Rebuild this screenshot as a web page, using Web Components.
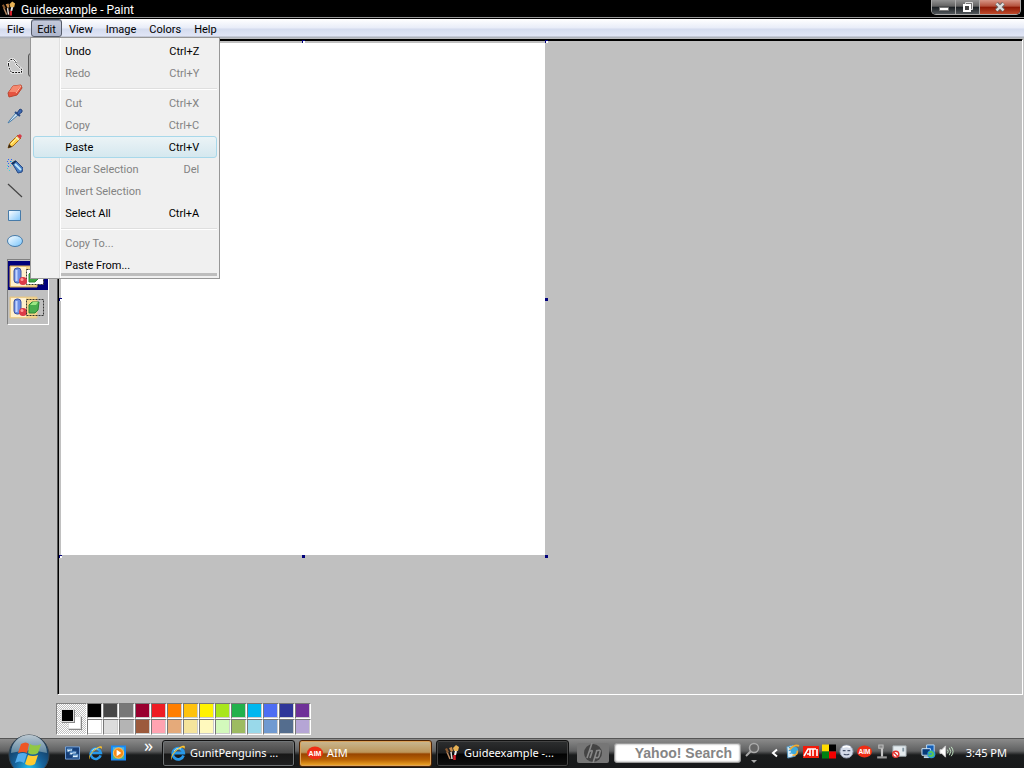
<!DOCTYPE html>
<html lang="en">
<head>
<meta charset="utf-8">
<title>Guideexample - Paint</title>
<style>
html, body { height: 100%; margin: 0; }
body { font: 12px "Roboto", "Liberation Sans", sans-serif; color: #000; background: #c0c0c0; overflow: hidden; }
</style>
</head>
<body>
<paint-desktop></paint-desktop>
<script>
const define = (name, render) => customElements.define(name, class extends HTMLElement {
  connectedCallback() {
    if (this.shadowRoot) return;
    const t = document.createElement('template');
    t.innerHTML = render(this);
    this.attachShadow({ mode: 'open' }).append(t.content.cloneNode(true));
  }
});

const icons = {
  brushes: `<svg viewBox="0 0 16 16"><path d="M3 7l3 7" stroke="#b98a63" stroke-width="1.500"/><path d="M1 4l2-1 2 4-2 1z" fill="#8a5a30"/><path d="M7 7l1 7" stroke="#e8e0d8" stroke-width="1.500"/><path d="M9 3l3-3 3 2-1 4-4 0z" fill="#e7b255"/><path d="M5 3l3-1 1 4-2 1z" fill="#c98c4c"/><path d="M12 6l-1 4" stroke="#eee" stroke-width="2"/><path d="M10.500 10v5" stroke="#d3202a" stroke-width="2.500"/></svg>`,
  lasso: `<svg viewBox="0 0 16 16"><path d="M1.500 7V4l2-2.500h3L9 4v2l5.500 5v3.500h-10L2.500 11z" fill="#c8c8c8" stroke="#fff" stroke-width="2"/><path d="M1.500 7V4l2-2.500h3L9 4v2l5.500 5v3.500h-10L2.500 11z" fill="none" stroke="#111" stroke-dasharray="2 1"/></svg>`,
  eraser: `<svg viewBox="0 0 16 16"><path d="M1 10l5-7 8-1 1 3-5 7-8 2z" fill="#e65440" stroke="#b9452f"/><path d="M2 9l4-6 8-1-5 7z" fill="#f58a70"/><path d="M9 10l5-7" stroke="#ffc0a8"/></svg>`,
  dropper: `<svg viewBox="0 0 16 16"><path d="M1 15l2-3 6-7 2 2-7 6z" fill="#cfe6f8" stroke="#497eaa"/><path d="M8 4l5 4" stroke="#264b87" stroke-width="2"/><path d="M10 5l3-4 2 1v2l-4 3z" fill="#3b67b2" stroke="#27457c"/></svg>`,
  pencil: `<svg viewBox="0 0 16 16"><path d="M1 15l2-5 8-8 3 3-8 8z" fill="#ffd34f" stroke="#a76912"/><path d="M1 15l1-4 3 3z" fill="#352717"/><path d="M10 3l3-2 2 2-2 3z" fill="#d33c4b"/><path d="M9 4l3 3" stroke="#e7eee0" stroke-width="1.500"/><path d="M4 11l6-6" stroke="#fff2a2"/></svg>`,
  spray: `<svg viewBox="0 0 16 16"><path d="M1 1.500h1m2 0h1M0 3.500h1m2 0h1M1 5.500h1m2 0h1M1 8.500h1" stroke="#2c62f2"/><path d="M0 7.500h1m2 0h1M0 10.500h1m1 2h1M4 3.500h1" stroke="#38d3e2"/><path d="M5 5l4-2 7 7-1 4-4 1z" fill="#477ec4" stroke="#294a85"/><path d="M8 6l6 6" stroke="#bfe6fa" stroke-width="2"/><path d="M5 6l4-3" stroke="#16345d" stroke-width="2"/></svg>`,
  line: `<svg viewBox="0 0 16 16"><path d="M1 1l14 13" stroke="#444" stroke-width="1.200"/></svg>`,
  rect: `<svg viewBox="0 0 16 16"><defs><linearGradient id="g" x2="1" y2="1"><stop stop-color="#fff"/><stop offset="1" stop-color="#80c5fa"/></linearGradient></defs><path d="M1.500 2.500h12v10h-12z" fill="url(#g)" stroke="#477ba9"/></svg>`,
  oval: `<svg viewBox="0 0 16 16"><defs><linearGradient id="g" x2="1" y2="1"><stop stop-color="#fff"/><stop offset="1" stop-color="#75c4fc"/></linearGradient></defs><ellipse cx="8" cy="8" rx="7.500" ry="5.500" fill="url(#g)" stroke="#477ba9"/></svg>`,
  opaque: `<svg viewBox="0 0 40 28"><path d="M2 4h27v21H2z" fill="#f5d68c" stroke="#d7aa5c"/><path d="M3 5h15v19H3z" fill="#fff0cc"/><path d="M18.500 7.500h17v15h-17z" stroke="#333" stroke-dasharray="2 1" fill="#fff"/><rect x="6" y="6" width="7" height="15" rx="3" fill="#6c8fe4" stroke="#3e539d"/><path d="M8.500 8v11" stroke="#c4d4ff" stroke-width="2"/><circle cx="15" cy="19" r="4" fill="#dd3a48"/><circle cx="14" cy="17.500" r="1.500" fill="#ff9a98"/><path d="M21 12l3-3h7l-1 8-3 3h-6z" fill="#3da545" stroke="#2c8635"/><path d="M22 12l3-3h5l-2 3z" fill="#91df7c"/></svg>`,
  transparent: `<svg viewBox="0 0 40 28"><path d="M2 4h27v21H2z" fill="#f5d68c" stroke="#e3c48a"/><path d="M3 5h15v19H3z" fill="#fff0cc"/><rect x="6" y="6" width="7" height="15" rx="3" fill="#6c8fe4" stroke="#3e539d"/><path d="M8.500 8v11" stroke="#c4d4ff" stroke-width="2"/><circle cx="15" cy="19" r="4" fill="#dd3a48"/><circle cx="14" cy="17.500" r="1.500" fill="#ff9a98"/><path d="M21 12l3-3h7l-1 8-3 3h-6z" fill="#48ae4d" stroke="#2c8635"/><path d="M22 12l3-3h5l-2 3z" fill="#9ae783"/><path d="M18.500 6.500h17v16h-17z" stroke="#333" stroke-dasharray="2 1" fill="none"/></svg>`,
  ie: `<svg viewBox="0 0 16 16"><path d="M13.500 10.500A5.500 5.500 0 1 1 13.700 8H4" fill="none" stroke="#2898e8" stroke-width="2.800"/><path d="M4 6a5 5 0 0 1 7-2" fill="none" stroke="#a5e4ff"/><path d="M2 15C-1 12 5 4 12 1c4-1 3 2 2 3 0-2-2-2-5 0C4 7 1 12 2 15z" fill="#ffc52c"/></svg>`,
  desktop: `<svg viewBox="0 0 16 14"><path d="M.500.500h15v13H.500z" fill="#173f79" stroke="#77a8e2"/><path d="M2 2h6v4H2zM5 5h7v4H5zM8 8h6v4H8z" fill="#e1f2ff" stroke="#24568f"/><path d="M3 3h4M6 6h5M9 9h4" stroke="#498bce"/></svg>`,
  player: `<svg viewBox="0 0 16 16"><path d="M1 1h14v14H1z" fill="#54b87c" stroke="#1689fb" stroke-width="2"/><path d="M2 2h12v3H2z" fill="#50b6e7"/><circle cx="8" cy="8" r="5.500" fill="#f58b16" stroke="#ffc36b"/><path d="M6 4.500l5 3.500-5 3.500z" fill="#fff"/></svg>`,
  aim: `<svg viewBox="0 0 16 14"><ellipse cx="8" cy="7" rx="8" ry="6.500" fill="#ee2d14"/><text x="8" y="9.500" text-anchor="middle" font-family="Liberation Sans,sans-serif" font-size="7" font-weight="700" fill="#fff">AIM</text></svg>`,
  ati: `<svg viewBox="0 0 16 12"><path d="M0 0h16v12H0z" fill="#f11b0c"/><path d="M1 10l4-7h2v7M4 8h3M7 3h6M10 3v7M14 3v7" fill="none" stroke="#fff" stroke-width="1.600"/></svg>`,
  squares: `<svg viewBox="0 0 14 14"><path d="M0 0h7v7H0z" fill="#ffdc00"/><path d="M7 0h7v7H7z" fill="#000"/><path d="M0 7h7v7H0z" fill="#008212"/><path d="M7 7h7v7H7z" fill="#f50000"/></svg>`,
  face: `<svg viewBox="0 0 16 16"><circle cx="8" cy="8" r="7" fill="#d5dcea" stroke="#8b94a7"/><path d="M4 7h3m2 0h3M5 11q3 1 6 0" fill="none" stroke="#48546c" stroke-width="1.200"/><path d="M4 3.500q4-2 8 0" fill="none" stroke="#fff" stroke-width="2"/></svg>`,
  globe: `<svg viewBox="0 0 16 16"><path d="M2 3l7-2 2 12-8 2z" fill="#d7eefa" stroke="#4f91bc"/><path d="M4 4l4-1M4 7l4-1M5 10l4-1" stroke="#318cc3"/><circle cx="10" cy="7" r="4" fill="#3caadd"/><path d="M8 12q6 0 5-5M5 6q5-6 10-4" stroke="#efaa32" stroke-width="1.800" fill="none"/></svg>`,
  joystick: `<svg viewBox="0 0 12 14"><path d="M6 3v9" stroke="#c5c5c5" stroke-width="2"/><path d="M1.500 12.500h9" stroke="#999" stroke-width="2"/><path d="M3 1h4v3H3z" fill="#888" stroke="#bbb"/></svg>`,
  blocked: `<svg viewBox="0 0 16 14"><path d="M1 1h14v11H1z" fill="#e4ebef" stroke="#aab3ba"/><path d="M11 3h2v4h-2z" fill="#8497a3"/><circle cx="4" cy="10" r="3.300" fill="#fff" stroke="#e2322e" stroke-width="1.500"/><path d="M2 8l4 4" stroke="#e2322e" stroke-width="1.500"/></svg>`,
  network: `<svg viewBox="0 0 16 16"><path d="M6 1h8v8H6z" fill="#155fb7" stroke="#c1e3ff"/><path d="M1 5h9v7H1z" fill="#073a78" stroke="#d5edff"/><path d="M3 14h6" stroke="#bcd7e9" stroke-width="2"/><circle cx="11" cy="11" r="4.300" fill="#2494df"/><path d="M8 10l3-2 2 2-2 3-3-1M12 13l2-2" stroke="#5ac752" stroke-width="1.800" fill="none"/></svg>`,
  volume: `<svg viewBox="0 0 16 16"><path d="M1 6h2l4-4v12l-4-4H1z" fill="#fff" stroke="#ccc"/><path d="M9 6q1.500 2 0 4m2-6q3 4 0 8m2-9q4 5 0 10" fill="none" stroke="#c9ecc9"/></svg>`
};

define('ui-icon', el => `<style>:host{display:block;width:16px;height:16px;flex:none}svg{display:block;width:100%;height:100%}</style>${icons[el.getAttribute('name')]}`);

define('title-bar', () => `<style>
:host{display:flex;height:19px;box-sizing:border-box;padding-left:1px;background:linear-gradient(#000 0 17px,#999 17px 18px,#000 18px);color:#fff}
ui-icon{margin-top:1px;width:15px;height:16px}
h1{font:12px/20px "Roboto",sans-serif;margin:0 auto 0 5px}
.controls{display:flex;height:15px;box-sizing:border-box;border:1px solid #aaa;border-top:0;border-radius:0 0 5px 5px;overflow:hidden;margin-right:3px}
button{width:24px;padding:0;border:0;border-right:1px solid #aaa;background:linear-gradient(#929292,#626262 45%,#171c20 50%,#53585c);display:grid;place-items:center}
button.close{width:40px;border:0;background:linear-gradient(#d79586,#b4503b 45%,#8d1603 50%,#c04b2b)}
svg{width:14px;height:12px}
</style><ui-icon name="brushes"></ui-icon><h1>Guideexample - Paint</h1><div class="controls">
<button aria-label="Minimize"><svg viewBox="0 0 14 12"><path d="M2.500 6.500h9v3h-9z" fill="#fff" stroke="#777"/></svg></button>
<button aria-label="Restore"><svg viewBox="0 0 14 12"><path d="M4.500 1.500h7v7h-7z" fill="#777" stroke="#ddd"/><path d="M3 4h6v6H3z" fill="#444" stroke="#fff" stroke-width="2"/></svg></button>
<button class="close" aria-label="Close"><svg viewBox="0 0 14 12"><path d="M3.500 2.500l7 7m0-7l-7 7" stroke="#666" stroke-width="4"/><path d="M3.500 2.500l7 7m0-7l-7 7" stroke="#ddd" stroke-width="2.400"/></svg></button></div>`);

define('menu-title', () => `<style>
:host{display:block}
button{font:11px/17px "Roboto",sans-serif;height:18px;border:1px solid transparent;border-radius:3px;padding:1px 5px 0;background:none;color:#000;display:block}
:host([open]) button{border-color:#555b69;background:linear-gradient(#c5cadb,#aeb6cc);box-shadow:inset 0 1px #8f96a8}
</style><button aria-haspopup="menu"><slot></slot></button>`);

define('menu-row', el => `<style>
:host{display:block}
button{font:11px/18px "Roboto",sans-serif;display:flex;justify-content:space-between;width:100%;height:22px;box-sizing:border-box;padding:2px 17px 0 31px;border:1px solid transparent;border-radius:3px;background:none;color:#000;text-align:left}
button:disabled{color:#838383}
:host([active]) button{border-color:#a8d8ea;background:linear-gradient(#ebf3f6,#d5e8ef)}
</style><button role="menuitem" ${el.hasAttribute('disabled') ? 'disabled' : ''}><span><slot></slot></span><span>${el.getAttribute('keys') || ''}</span></button>`);

define('edit-menu', () => `<style>
:host{display:block;width:190px;box-sizing:border-box;border:1px solid #979797;padding:2px;background:linear-gradient(90deg,#f0f0f0 28px,#e0e0e0 28px 29px,#fff 29px 30px,#f0f0f0 30px)}
hr{margin:4px 0 2px 28px;border:0;border-top:1px solid #dfdfdf;border-bottom:1px solid #fff}
.edge{position:absolute;left:30px;right:2px;bottom:2px;height:3px;background:#bdbdbd}
</style><div role="menu">
<menu-row keys="Ctrl+Z">Undo</menu-row><menu-row keys="Ctrl+Y" disabled>Redo</menu-row><hr>
<menu-row keys="Ctrl+X" disabled>Cut</menu-row><menu-row keys="Ctrl+C" disabled>Copy</menu-row><menu-row keys="Ctrl+V" active>Paste</menu-row><menu-row keys="Del" disabled>Clear Selection</menu-row><menu-row disabled>Invert Selection</menu-row><menu-row keys="Ctrl+A">Select All</menu-row><hr>
<menu-row disabled>Copy To...</menu-row><menu-row>Paste From...</menu-row></div><div class="edge"></div>`);

define('menu-bar', () => `<style>
:host{display:block;height:20px;background:linear-gradient(#fff,#e8ecf8 45%,#d4dbee 50%,#e1e6f6 17px,#a8adb9 18px,#c0c0c0 20px)}
nav{display:flex;padding-left:1px;gap:1px}
.open{position:relative}
edit-menu{position:absolute;left:-1px;top:18px;z-index:5}
</style><nav><menu-title>File</menu-title><div class="open"><menu-title open>Edit</menu-title><edit-menu></edit-menu></div><menu-title>View</menu-title><menu-title>Image</menu-title><menu-title>Colors</menu-title><menu-title>Help</menu-title></nav>`);

define('tool-box', () => {
  const tools = ['lasso', 'eraser', 'dropper', 'pencil', 'spray', 'line', 'rect', 'oval'];
  return `<style>
:host{display:block;width:57px;flex:none;box-sizing:border-box;padding:14px 0 0 2px;background:#c0c0c0}
.tools{display:grid;grid-template-columns:25px 25px;grid-auto-rows:25px}
button{padding:0;border:0;background:none;display:grid;place-items:center;grid-column:1}
.on{grid-column:2;grid-row:1;border:1px solid #555;border-radius:3px;background:#aaa;margin:0 0 1px 1px}
.options{margin:6px 0 0 5px;width:42px;box-sizing:border-box;border:1px solid #808080;border-right-color:#fff;border-bottom-color:#fff;padding-top:1px}
.options button{width:40px;height:29px}
.options button.sel{background:#00007b}
.options button+button{height:34px}
.options ui-icon{width:40px;height:28px}
</style><div class="tools">${tools.map(t => `<button aria-label="${t}"><ui-icon name="${t}"></ui-icon></button>`).join('')}<button class="on" aria-label="select"></button></div>
<div class="options"><button class="sel" aria-label="Opaque"><ui-icon name="opaque"></ui-icon></button><button aria-label="Transparent"><ui-icon name="transparent"></ui-icon></button></div>`;
});

define('paint-view', () => `<style>
:host{display:block;flex:1;min-width:0;overflow:hidden;background:#c0c0c0;border:1px solid;border-color:#000 #fff #fff #555;box-shadow:inset 1px 1px #000;margin:0 1px 0 0}
.sheet{position:relative;width:484px;height:512px;margin:3px;background:#fff}
i{position:absolute;width:3px;height:3px;box-sizing:border-box;background:#00007b}
.l,.t{background:#fff;border:solid #00007b;border-width:1px 0 0 1px}
.l{left:-2px}.c{left:241px}.r{left:484px}.t{top:-3px}.m{top:255px}.b{top:512px}
</style><div class="sheet" role="img" aria-label="Canvas"><i class="l t"></i><i class="c t"></i><i class="r t"></i><i class="l m"></i><i class="r m"></i><i class="l b"></i><i class="c b"></i><i class="r b"></i></div>`);

define('color-palette', () => {
  const colors = '#000000 #464646 #787878 #99002f #ee1c24 #ff7e00 #ffc20e #fff200 #a8e61d #22b14c #00b7ef #4d6df3 #2f3699 #6f3198 #ffffff #dcdcdc #b4b4b4 #9c5a3c #ffa3b1 #e5aa7a #f5e49c #fff9bd #d3f9bc #9dbb61 #99d9ea #709ad1 #546d8e #b5a5d5'.split(' ');
  return `<style>
:host{display:flex;height:43px;box-sizing:border-box;padding:8px 0 0 56px;background:#c0c0c0}
.current{position:relative;width:31px;height:32px;box-sizing:border-box;border:1px solid #808080;border-right-color:#fff;border-bottom-color:#fff;background:repeating-conic-gradient(#fff 0 25%,#c0c0c0 0 50%) 0 0/2px 2px}
.current i{position:absolute;width:11px;height:11px;border:1px solid #ddd;box-shadow:1px 1px #888}
.fg{left:4px;top:5px;background:#000;z-index:1}.bg{left:11px;top:12px;background:#fff}
.grid{display:grid;grid-template-columns:repeat(14,16px);grid-auto-rows:16px}
button{padding:0;border:1px solid #777;border-right-color:#fff;border-bottom-color:#fff;background:var(--c);box-shadow:inset -1px -1px #ccc}
</style><div class="current"><i class="fg"></i><i class="bg"></i></div><div class="grid">${colors.map(c => `<button aria-label="${c}" style="--c:${c}"></button>`).join('')}</div>`;
});

define('task-button', () => `<style>
:host{display:block;width:133px;flex:none}
button{font:11px/22px "Noto Sans","Open Sans",sans-serif;color:#fff;display:flex;align-items:center;gap:4px;width:100%;height:27px;padding:0 7px;border:1px solid #111;border-radius:3px;box-shadow:inset 0 0 0 1px #707476;background:linear-gradient(#696969,#484848 48%,#171717 52%,#202122);white-space:nowrap}
:host([alert]) button{border-color:#4d2304;box-shadow:inset 0 0 0 1px #d9a15b;background:linear-gradient(#c9b892,#bd965b 45%,#984500 52%,#b86205 75%,#f3ac2b)}
:host([current]) button{background:linear-gradient(#2d2f30,#1c1d1e 48%,#020202 52%,#111);box-shadow:inset 0 0 0 1px #444}
</style><button><slot name="icon"></slot><span><slot></slot></span></button>`);

define('task-bar', () => `<style>
:host{display:flex;height:30px;box-sizing:border-box;align-items:center;padding-left:8px;position:relative;color:#fff;font:11px/16px "Noto Sans","Open Sans",sans-serif;background:linear-gradient(#555 0 1px,#8b8b8b 1px,#5f6061 13px,#1a1c1d 17px,#18191a)}
button{font:inherit;color:inherit;border:0;background:none;padding:0}
.start{width:42px;height:30px;position:relative;flex:none}
.start svg{position:absolute;left:0;bottom:-8px;width:42px;height:42px}
.quick{display:flex;align-items:center;gap:8px;margin-left:15px;width:97px}
.quick ui-icon{width:15px}
.more{font-size:18px;line-height:16px;margin:-16px 0 0 10px}
.tasks{display:flex;gap:4px}
.hp{width:32px;height:20px;margin-left:8px;background:#767676;border-radius:2px;display:grid;place-items:center}
.hp svg{width:22px;height:20px}
input{font:bold 14px/16px "Liberation Sans",sans-serif;width:127px;height:20px;box-sizing:border-box;border:1px solid #999;border-radius:3px;margin:0 0 0 5px;padding:0 8px 0 0;text-align:right;background:#fff;box-shadow:inset 0 0 2px #777}
input::placeholder{color:#858585;opacity:1}
.find{width:17px;height:22px;margin-left:4px}
.find svg{display:block}
.tray{display:flex;align-items:center;gap:3px;margin-left:8px}
.tray>ui-icon{margin-top:-3px;width:15px;height:15px}
.tray .arrow{width:8px;height:12px;margin-right:4px}
.tray .arrow svg{display:block}
.tray ui-icon.wide{width:16px;height:12px}
.tray ui-icon.narrow{width:14px}
.tray ui-icon.net{margin-left:11px}
time{margin:0 17px 0 auto}
</style>
<button class="start" aria-label="Start"><svg viewBox="0 0 42 42"><defs><radialGradient id="o" cx=".5" cy=".85" r=".8"><stop stop-color="#1fc3f2"/><stop offset=".45" stop-color="#17639c"/><stop offset="1" stop-color="#122d4b"/></radialGradient><linearGradient id="s" x2="0" y2="1"><stop stop-color="#e5eff4"/><stop offset="1" stop-color="#7095aa"/></linearGradient></defs><circle cx="21" cy="21" r="20" fill="url(#o)" stroke="#344552"/><path d="M3 19a18 18 0 0 1 36 0q-18-5-36 0z" fill="url(#s)" opacity=".8"/><path d="M13 10q5-3 8 0l-2 9q-4-2-9 0z" fill="#ee5624"/><path d="M22 10q5 3 11 0l-3 9q-5 3-10 0z" fill="#91c843"/><path d="M10 20q5-2 9 0l-3 9q-4-3-9 0z" fill="#52acec"/><path d="M20 21q5 2 10 0l-3 9q-5 3-10 0z" fill="#ffcb31"/></svg></button>
<div class="quick"><ui-icon name="desktop"></ui-icon><ui-icon name="ie"></ui-icon><ui-icon name="player"></ui-icon><button class="more" aria-label="More">»</button></div>
<div class="tasks"><task-button><ui-icon slot="icon" name="ie"></ui-icon>GunitPenguins ...</task-button><task-button alert><ui-icon slot="icon" name="aim"></ui-icon>AIM</task-button><task-button current><ui-icon slot="icon" name="brushes"></ui-icon>Guideexample -...</task-button></div>
<button class="hp" aria-label="HP"><svg viewBox="0 0 22 20"><circle cx="11" cy="10" r="9" fill="#444"/><path d="M10 0L5 15m2-6q4-3 3 0l-2 6M15 7l-4 13m3-12q5-2 4 1l-1 4q-1 3-4 1" fill="none" stroke="#888" stroke-width="1.600"/></svg></button>
<input type="text" aria-label="Yahoo! Search" placeholder="Yahoo! Search">
<button class="find" aria-label="Search"><svg width="17" height="22" viewBox="0 0 17 22"><circle cx="9" cy="6" r="4.500" fill="#666" stroke="#aaa" stroke-width="1.500"/><path d="M6 9l-5 5" stroke="#aaa" stroke-width="2"/><path d="M6 18h6l-3 3z" fill="#aaa"/></svg></button>
<div class="tray"><button class="arrow" aria-label="Show hidden icons"><svg width="8" height="12" viewBox="0 0 8 12"><path d="M7 2.500L3 6l4 3.500" fill="none" stroke="#fff" stroke-width="2"/></svg></button><ui-icon name="globe"></ui-icon><ui-icon class="wide" name="ati"></ui-icon><ui-icon class="narrow" name="squares"></ui-icon><ui-icon name="face"></ui-icon><ui-icon name="aim"></ui-icon><ui-icon class="narrow" name="joystick"></ui-icon><ui-icon name="blocked"></ui-icon><ui-icon class="net" name="network"></ui-icon><ui-icon name="volume"></ui-icon></div><time>3:45 PM</time>`);

define('paint-desktop', () => `<style>
:host{display:flex;flex-direction:column;height:100vh;background:#c0c0c0}
main{display:flex;flex:1;min-height:0}
</style><title-bar></title-bar><menu-bar></menu-bar><main><tool-box></tool-box><paint-view></paint-view></main><color-palette></color-palette><task-bar></task-bar>`);
</script>
</body>
</html>
